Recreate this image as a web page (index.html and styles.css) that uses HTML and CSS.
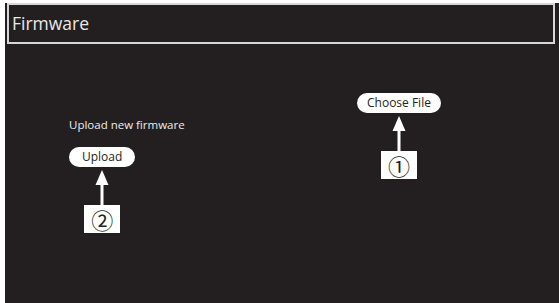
FILE: index.html
```html
<!DOCTYPE html>
<html>
<head>
<meta charset="utf-8">
<link rel="stylesheet" href="styles.css">
</head>
<body>
<div class="panel">
  <div class="header">Firmware</div>
  <div class="content">
    <div class="left">
      <div class="label">Upload new firmware</div>
      <div class="callout-group">
        <span class="pill pill-upload">Upload</span>
        <svg class="arrow" width="14" height="35" viewBox="0 0 14 35"><polygon points="7,0 13.5,15 0.5,15" fill="#fff"/><rect x="5.5" y="14" width="3" height="21" fill="#fff"/></svg>
        <span class="num">②</span>
      </div>
    </div>
    <div class="right">
      <div class="callout-group">
        <span class="pill">Choose File</span>
        <svg class="arrow" width="14" height="35" viewBox="0 0 14 35"><polygon points="7,0 13.5,15 0.5,15" fill="#fff"/><rect x="5.5" y="14" width="3" height="21" fill="#fff"/></svg>
        <span class="num">①</span>
      </div>
    </div>
  </div>
</div>
</body>
</html>
```
FILE: styles.css
```css
html, body {
  margin: 0;
  padding: 0;
  background: #ffffff;
}
body {
  width: 559px;
  height: 303px;
  overflow: hidden;
  font-family: "Open Sans", "DejaVu Sans", sans-serif;
}
.panel {
  margin: 3px 0 0 5px;
  height: 300px;
  background: #231f20;
  display: flex;
  flex-direction: column;
}
.header {
  margin: 0 4px 0 2px;
  height: 37px;
  border: 2px solid #d6d6d6;
  color: #e8e8e8;
  font-size: 17.5px;
  line-height: 37px;
  padding-left: 3px;
}
.content {
  display: flex;
  padding: 49px 0 0 64px;
}
.left {
  width: 288px;
  margin-top: 24px;
  display: flex;
  flex-direction: column;
  align-items: flex-start;
}
.label {
  color: #ececec;
  font-size: 11.5px;
  line-height: 16px;
  margin-bottom: 14px;
}
.callout-group {
  display: flex;
  flex-direction: column;
  align-items: center;
}
.pill {
  display: block;
  height: 20px;
  line-height: 20px;
  padding: 0 10px;
  border-radius: 10px;
  background: #ffffff;
  color: #231f20;
  font-size: 12px;
}
.pill-upload {
  padding: 0 13px;
}
.arrow {
  display: block;
  margin-top: 3px;
}
.num {
  display: block;
  width: 36px;
  height: 28px;
  background: #ffffff;
  color: #231f20;
  text-align: center;
  font-family: "Noto Sans CJK JP", "DejaVu Sans", sans-serif;
  font-size: 22px;
  line-height: 28px;
}
```
